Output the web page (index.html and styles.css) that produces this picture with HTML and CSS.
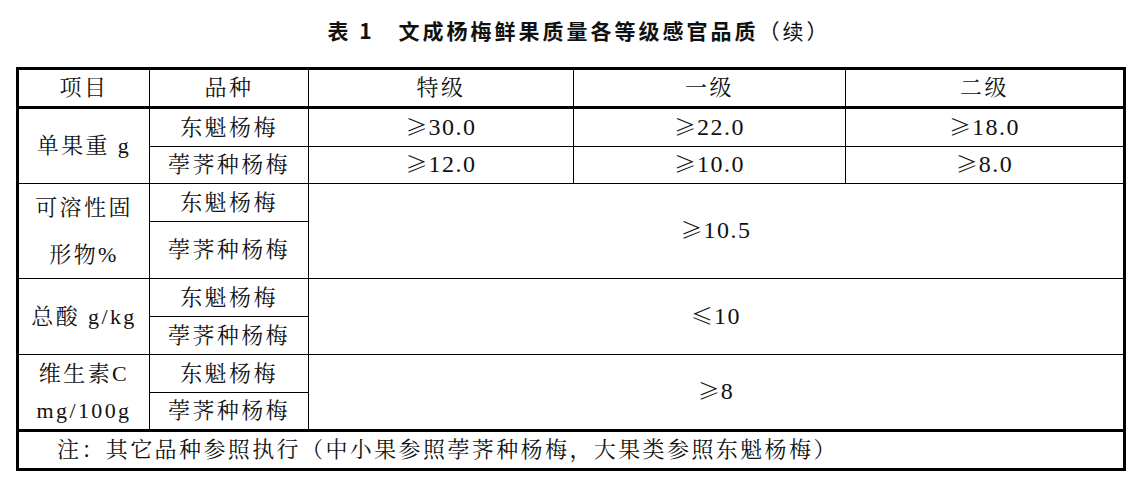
FILE: index.html
```html
<!DOCTYPE html>
<html lang="zh-CN">
<head>
<meta charset="utf-8">
<title>表1 文成杨梅鲜果质量各等级感官品质（续）</title>
<link rel="stylesheet" href="styles.css">
</head>
<body>
<div class="page">
  <h1 class="title">表 1　文成杨梅鲜果质量各等级感官品质<span class="paren">（续）</span></h1>
  <table class="grade-table">
    <colgroup>
      <col class="c1"><col class="c2"><col class="c3"><col class="c4"><col class="c5">
    </colgroup>
    <thead>
      <tr class="r-head">
        <th>项目</th><th>品种</th><th>特级</th><th>一级</th><th>二级</th>
      </tr>
    </thead>
    <tbody>
      <tr class="r-a">
        <td rowspan="2">单果重 g</td><td>东魁杨梅</td><td class="num"><span class="sym">≥</span>30.0</td><td class="num"><span class="sym">≥</span>22.0</td><td class="num"><span class="sym">≥</span>18.0</td>
      </tr>
      <tr class="r-b">
        <td>荸荠种杨梅</td><td class="num"><span class="sym">≥</span>12.0</td><td class="num"><span class="sym">≥</span>10.0</td><td class="num"><span class="sym">≥</span>8.0</td>
      </tr>
      <tr class="r-c">
        <td rowspan="2" class="two-line">可溶性固<br>形物%</td><td>东魁杨梅</td><td rowspan="2" colspan="3" class="num"><span class="sym">≥</span>10.5</td>
      </tr>
      <tr class="r-d">
        <td>荸荠种杨梅</td>
      </tr>
      <tr class="r-e">
        <td rowspan="2">总酸 g/kg</td><td>东魁杨梅</td><td rowspan="2" colspan="3" class="num"><span class="sym">≤</span>10</td>
      </tr>
      <tr class="r-f">
        <td>荸荠种杨梅</td>
      </tr>
      <tr class="r-g">
        <td rowspan="2" class="vit">维生素C<br>mg/100g</td><td>东魁杨梅</td><td rowspan="2" colspan="3" class="num"><span class="sym">≥</span>8</td>
      </tr>
      <tr class="r-h">
        <td>荸荠种杨梅</td>
      </tr>
    </tbody>
    <tfoot>
      <tr class="r-note">
        <td colspan="5" class="note">注：其它品种参照执行（中小果参照荸荠种杨梅，大果类参照东魁杨梅）</td>
      </tr>
    </tfoot>
  </table>
</div>
</body>
</html>
```
FILE: styles.css
```css
html, body {
  margin: 0;
  padding: 0;
  background: #ffffff;
}

.page {
  padding: 18px 0 0 16px;
  width: 1112px;
}

.title {
  margin: 0 0 25px 0;
  padding-left: 14px;
  text-align: center;
  font-family: "Noto Sans CJK SC", "Liberation Sans", sans-serif;
  font-weight: 700;
  font-size: 21px;
  line-height: 24px;
  letter-spacing: 3px;
  color: #111;
}

.title .paren {
  font-weight: 400;
}

.grade-table {
  border-collapse: collapse;
  table-layout: fixed;
  width: 1110px;
  border: 3px solid #000;
  font-family: "Liberation Serif", "Noto Serif CJK SC", "Noto Sans CJK SC", serif;
  font-size: 22px;
  color: #111;
}

.c1 { width: 132px; }
.c2 { width: 159px; }
.c3 { width: 265px; }
.c4 { width: 272px; }
.c5 { width: 279px; }

.grade-table th,
.grade-table td {
  border: 1px solid #000;
  padding: 0;
  text-align: center;
  vertical-align: middle;
  font-weight: 400;
  letter-spacing: 2.4px;
  line-height: 26px;
  white-space: nowrap;
}

.grade-table thead th {
  border-bottom: 3px solid #000;
}

.grade-table .r-a td {
  border-top: 3px solid #000;
}

.grade-table .num {
  font-size: 24px;
  letter-spacing: 1.5px;
  padding-bottom: 4px;
}

.grade-table .sym {
  font-family: "Noto Sans CJK SC", "DejaVu Sans", sans-serif;
  font-size: 22px;
  font-weight: 300;
  letter-spacing: 0;
  margin-right: 1px;
}

.r-head { height: 39px; }
.r-a { height: 39px; }
.r-b { height: 37px; }
.r-c { height: 38px; }
.r-d { height: 56px; }
.r-e { height: 38px; }
.r-f { height: 38px; }
.r-g { height: 38px; }
.r-h { height: 38px; }
.r-note { height: 39px; }

.two-line {
  line-height: 47px !important;
}

.vit {
  line-height: 37px !important;
}

.grade-table tfoot td {
  border-top: 3px solid #000;
}

.note {
  text-align: left !important;
  padding-left: 38px !important;
}
```
